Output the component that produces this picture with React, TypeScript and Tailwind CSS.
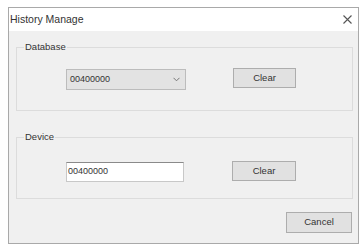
import React from "react";

const font = { fontFamily: '"Liberation Sans", Arial, sans-serif' };

function Btn({ label, w, h }: { label: string; w: string; h: string }) {
  return (
    <div
      className={`${w} ${h} bg-[#e1e1e1] border border-[#adadad] flex items-center justify-center text-[9.5px] text-[#333]`}
    >
      {label}
    </div>
  );
}

export default function App() {
  return (
    <div className="w-[362px] h-[245px] bg-white pl-[8px] pt-[7px]" style={font}>
      <div className="w-[351px] h-[237px] border border-[#a9a9a9] flex flex-col bg-[#f0f0f0]">
        <div className="h-[23px] shrink-0 bg-white flex items-center justify-between pl-[1px] pr-[5px]">
          <span className="text-[10.5px] text-[#333] leading-none">History Manage</span>
          <svg width="9" height="9" viewBox="0 0 9 9" className="mr-[1px]">
            <path d="M0.5 0.5 L8.5 8.5 M8.5 0.5 L0.5 8.5" stroke="#555" strokeWidth="1.1" />
          </svg>
        </div>
        <div className="flex-1 flex flex-col pl-[7px] pr-[5px]">
          <fieldset className="mt-[10px] h-[70px] border border-[#dcdcdc] px-[7px] pt-[16px]">
            <legend className="px-[1px] text-[9.5px] leading-[12px] text-[#333]">Database</legend>
            <div className="flex items-start pl-[42px]">
              <div className="w-[120px] h-[21px] bg-[#e3e3e3] border border-[#bcbcbc] flex items-center justify-between pl-[3px] pr-[5px]">
                <span className="text-[9px] text-[#333]">00400000</span>
                <svg width="7" height="5" viewBox="0 0 7 5">
                  <path d="M0.5 0.8 L3.5 3.8 L6.5 0.8" stroke="#777" strokeWidth="1" fill="none" />
                </svg>
              </div>
              <div className="ml-[47px] -mt-[1px]">
                <Btn label="Clear" w="w-[63px]" h="h-[20px]" />
              </div>
            </div>
          </fieldset>
          <fieldset className="mt-[20px] h-[68px] border border-[#dcdcdc] px-[7px] pt-[19px]">
            <legend className="px-[1px] text-[9.5px] leading-[12px] text-[#333]">Device</legend>
            <div className="flex items-start pl-[42px]">
              <div className="w-[118px] h-[20px] bg-white border border-[#c8c8c8] border-t-[#8a8a8a] flex items-center pl-[1px]">
                <span className="text-[9px] text-[#333]">00400000</span>
              </div>
              <div className="ml-[48px] -mt-[1px]">
                <Btn label="Clear" w="w-[64px]" h="h-[20px]" />
              </div>
            </div>
          </fieldset>
          <div className="mt-[13px] self-end mr-[1px]">
            <Btn label="Cancel" w="w-[66px]" h="h-[21px]" />
          </div>
        </div>
      </div>
    </div>
  );
}
